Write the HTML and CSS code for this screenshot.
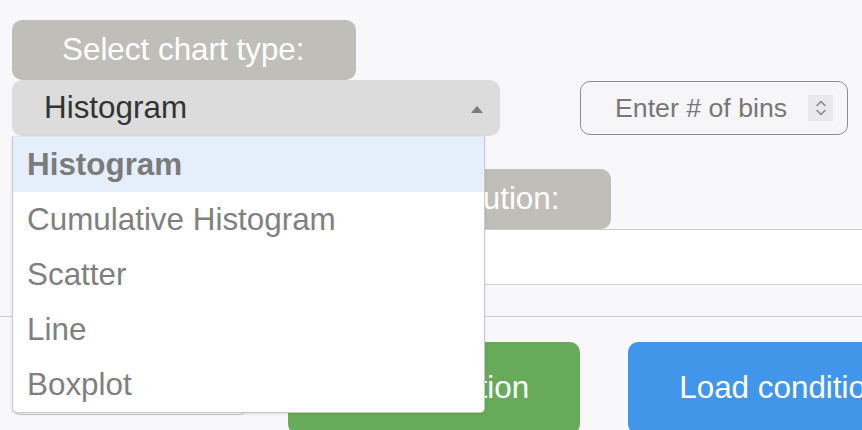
FILE: index.html
```html
<!DOCTYPE html>
<html>
<head>
<meta charset="utf-8">
<link rel="stylesheet" href="styles.css">
</head>
<body>
<div class="page">
  <div class="row-top">
    <div class="chart-col">
      <div class="pill-label">Select chart type:</div>
      <div class="select-wrap">
        <div class="select">
          <span class="select-value">Histogram</span>
          <svg class="select-arrow" width="12" height="7" viewBox="0 0 12 7"><path d="M0 7 L6 0 L12 7 Z" fill="#7a7a7a"/></svg>
        </div>
        <ul class="dropdown">
          <li class="opt opt-active">Histogram</li>
          <li class="opt">Cumulative Histogram</li>
          <li class="opt">Scatter</li>
          <li class="opt">Line</li>
          <li class="opt">Boxplot</li>
        </ul>
      </div>
    </div>
    <div class="bins">
      <span class="bins-ph">Enter # of bins</span>
      <span class="spinner">
        <svg width="14" height="20" viewBox="0 0 14 20"><path d="M3 7.5 L7 3.5 L11 7.5 M3 12.5 L7 16.5 L11 12.5" fill="none" stroke="#8a8a8a" stroke-width="1.6" stroke-linecap="round" stroke-linejoin="round"/></svg>
      </span>
    </div>
  </div>
  <div class="pill-label label-second">Select distribution:</div>
  <div class="cond-input"></div>
  <div class="divider"></div>
  <div class="actions">
    <div class="small-input"></div>
    <button class="btn btn-green">Add condition</button>
    <button class="btn btn-blue">Load condition</button>
  </div>
</div>
</body>
</html>
```
FILE: styles.css
```css
html, body {
  margin: 0;
  padding: 0;
  background: #f8f8fa;
  overflow: hidden;
  width: 862px;
  height: 430px;
}
body {
  font-family: "Liberation Sans", Arial, sans-serif;
  font-size: 31.4px;
}
.page {
  padding: 20px 12px 0 12px;
}
.row-top {
  display: flex;
  align-items: flex-end;
}
.chart-col {
  width: 488px;
  display: flex;
  flex-direction: column;
  align-items: flex-start;
}
.pill-label {
  background: #bfbeb9;
  color: #ffffff;
  height: 60px;
  line-height: 60px;
  padding: 0 51px 0 50px;
  border-radius: 10px;
  white-space: nowrap;
}
.select-wrap {
  position: relative;
  width: 488px;
}
.select {
  height: 56px;
  background: #dbdcdb;
  border-radius: 10px;
  display: flex;
  align-items: center;
  padding: 0 17px 0 32px;
  color: #333333;
}
.select-value {
  flex: 1;
}
.select-arrow {
  display: block;
  margin-top: 2px;
}
.dropdown {
  position: absolute;
  top: 56px;
  left: 0;
  width: 471px;
  margin: 0;
  padding: 0;
  list-style: none;
  background: #ffffff;
  border: 1px solid #c9c9c9;
  border-top: 1px solid #dfe6ee;
  border-radius: 0 0 5px 5px;
  box-shadow: 0 1px 3px rgba(0,0,0,0.12);
  z-index: 5;
}
.opt {
  height: 55px;
  line-height: 55px;
  padding-left: 14px;
  color: #808080;
}
.opt-active {
  background: #e5effc;
  font-weight: bold;
  color: #7b7b7b;
}
.bins {
  box-sizing: border-box;
  width: 268px;
  height: 54px;
  margin: 0 0 1px 80px;
  border: 1px solid #8c8c8c;
  border-radius: 10px;
  background: #f6f6f8;
  display: flex;
  align-items: center;
  padding: 0 14px 0 34px;
  font-size: 26.7px;
  color: #777777;
}
.bins-ph {
  flex: 1;
}
.spinner {
  width: 25px;
  height: 26px;
  background: #e8e8ed;
  display: flex;
  align-items: center;
  justify-content: center;
}
.spinner svg {
  display: block;
}
.label-second {
  display: inline-block;
  margin: 33px 0 0 241px;
}
.cond-input {
  box-sizing: border-box;
  width: 870px;
  height: 56px;
  background: #ffffff;
  border: 1px solid #cccccc;
  border-radius: 4px;
}
.divider {
  height: 1px;
  background: #cccccc;
  margin: 31px -12px 0 -12px;
}
.actions {
  display: flex;
  align-items: flex-start;
  margin-top: 25px;
  white-space: nowrap;
}
.small-input {
  box-sizing: border-box;
  width: 236px;
  height: 56px;
  margin-top: 17px;
  background: #ffffff;
  border: 1px solid #cccccc;
  border-radius: 8px;
  flex: none;
}
.btn {
  flex: none;
  height: 92px;
  border: none;
  border-radius: 10px;
  padding: 0 51px;
  font-family: "Liberation Sans", Arial, sans-serif;
  font-size: 31.4px;
  color: #ffffff;
}
.btn-green {
  background: #67ab5a;
  margin-left: 40px;
}
.btn-blue {
  background: #4196ea;
  margin-left: 48px;
}
```
